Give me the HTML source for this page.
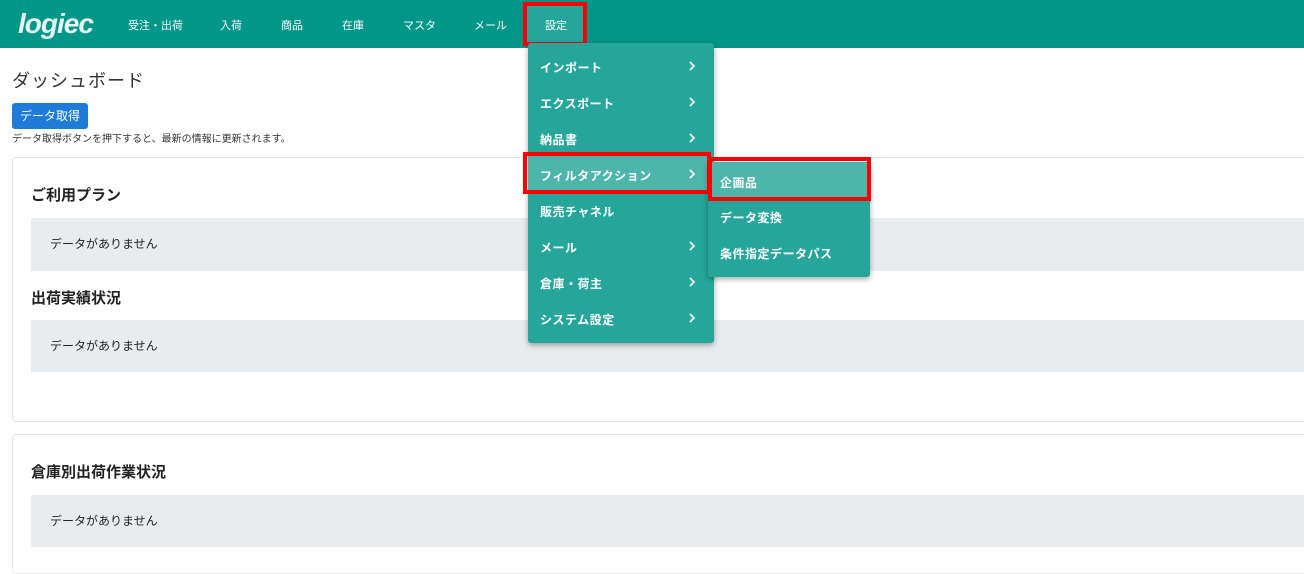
<!DOCTYPE html><html><head><meta charset="utf-8"><style>
*{box-sizing:border-box;margin:0;padding:0}
body{width:1304px;height:564px;overflow:hidden;background:#fff;font-family:"Liberation Sans","Noto Sans CJK JP",sans-serif;color:#222;position:relative}
.hdr{position:absolute;left:0;top:0;width:1304px;height:48px;background:#009688}
.logo{position:absolute;left:18px;top:8px;color:#e8f5f3;font-size:28px;font-weight:bold;font-style:italic;letter-spacing:-1px}
.nav{position:absolute;top:17px;color:#fff;font-size:11px}
.sel{position:absolute;left:523px;top:2px;width:64px;height:44px;background:#26a69a;border:4px solid #f00}
.ab{position:absolute}
.menu{position:absolute;left:528px;top:43px;width:186px;height:300px;background:#26a69a;border-radius:3px;box-shadow:0 2px 6px rgba(0,0,0,.35)}
.mi{position:absolute;left:12px;color:#fff;font-size:12px;font-weight:bold;letter-spacing:0.5px}
.ar{position:absolute;left:160px;width:8px;height:10px}
.sub{position:absolute;left:708px;top:162px;width:162px;height:115px;background:#26a69a;border-radius:3px;box-shadow:0 2px 6px rgba(0,0,0,.35)}
.red{position:absolute;border:4px solid #f00}
.card{position:absolute;left:12px;width:1300px;border:1px solid #e6e6e6;border-radius:4px}
.h{position:absolute;left:31px;font-size:15px;font-weight:bold;color:#222}
.g{position:absolute;left:31px;width:1280px;background:#e9ecef;font-size:12px;padding-left:19px}
</style></head><body>
<div class="hdr"></div>
<div class="logo">logiec</div>
<div class="nav" style="left:128px">受注・出荷</div>
<div class="nav" style="left:220px">入荷</div>
<div class="nav" style="left:281px">商品</div>
<div class="nav" style="left:342px">在庫</div>
<div class="nav" style="left:403px">マスタ</div>
<div class="nav" style="left:474px">メール</div>
<div class="sel"></div>
<div class="nav" style="left:545px">設定</div>

<div class="ab" style="left:12px;top:67px;font-size:18px;color:#333;letter-spacing:1px">ダッシュボード</div>
<div class="ab" style="left:12px;top:103px;width:76px;height:26px;background:#1e7bd8;border-radius:3px;color:#fff;font-size:12px;text-align:center;line-height:26px">データ取得</div>
<div class="ab" style="left:12px;top:130px;font-size:10px;color:#333">データ取得ボタンを押下すると、最新の情報に更新されます。</div>

<div class="card" style="top:157px;height:265px"></div>
<div class="h" style="top:184px">ご利用プラン</div>
<div class="g" style="top:218px;height:53px;line-height:53px">データがありません</div>
<div class="h" style="top:287px">出荷実績状況</div>
<div class="g" style="top:320px;height:52px;line-height:52px">データがありません</div>
<div class="card" style="top:434px;height:140px"></div>
<div class="h" style="top:461px">倉庫別出荷作業状況</div>
<div class="g" style="top:495px;height:52px;line-height:52px">データがありません</div>

<div class="menu">
<div class="ab" style="left:0;top:113px;width:180px;height:36px;background:#4db6ac"></div>
<div class="mi" style="top:16px">インポート</div><svg class="ar" style="top:18px" viewBox="0 0 8 10"><path d="M2 1l4 4-4 4" fill="none" stroke="#fff" stroke-width="1.8"/></svg>
<div class="mi" style="top:52px">エクスポート</div><svg class="ar" style="top:54px" viewBox="0 0 8 10"><path d="M2 1l4 4-4 4" fill="none" stroke="#fff" stroke-width="1.8"/></svg>
<div class="mi" style="top:88px">納品書</div><svg class="ar" style="top:90px" viewBox="0 0 8 10"><path d="M2 1l4 4-4 4" fill="none" stroke="#fff" stroke-width="1.8"/></svg>
<div class="mi" style="top:124px">フィルタアクション</div><svg class="ar" style="top:126px" viewBox="0 0 8 10"><path d="M2 1l4 4-4 4" fill="none" stroke="#fff" stroke-width="1.8"/></svg>
<div class="mi" style="top:160px">販売チャネル</div>
<div class="mi" style="top:196px">メール</div><svg class="ar" style="top:198px" viewBox="0 0 8 10"><path d="M2 1l4 4-4 4" fill="none" stroke="#fff" stroke-width="1.8"/></svg>
<div class="mi" style="top:232px">倉庫・荷主</div><svg class="ar" style="top:234px" viewBox="0 0 8 10"><path d="M2 1l4 4-4 4" fill="none" stroke="#fff" stroke-width="1.8"/></svg>
<div class="mi" style="top:268px">システム設定</div><svg class="ar" style="top:270px" viewBox="0 0 8 10"><path d="M2 1l4 4-4 4" fill="none" stroke="#fff" stroke-width="1.8"/></svg>
</div>
<div class="red" style="left:523px;top:152px;width:188px;height:42px"></div>
<div class="sub">
<div class="ab" style="left:0;top:0;width:162px;height:38px;background:#4db6ac"></div>
<div class="mi" style="top:12px">企画品</div>
<div class="mi" style="top:47px">データ変換</div>
<div class="mi" style="top:83px">条件指定データパス</div>
</div>
<div class="red" style="left:708px;top:157px;width:163px;height:44px"></div>
</body></html>
